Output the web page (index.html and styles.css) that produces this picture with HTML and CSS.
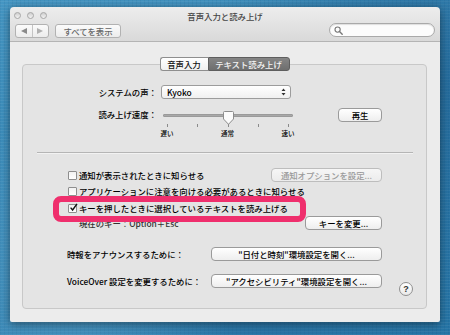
FILE: index.html
```html
<!DOCTYPE html>
<html>
<head>
    <title>音声入力と読み上げ</title>
    <link rel="stylesheet" href="styles.css">
</head>
<body>
    <!-- Preferences window -->
    <div class="window">
        <div class="titlebar">
            <div class="title-row">
                <div class="lights">
                    <span class="light"></span>
                    <span class="light"></span>
                    <span class="light"></span>
                </div>
                <div class="title">音声入力と読み上げ</div>
                <div></div>
            </div>
            <div class="toolbar">
                <div class="nav">
                    <span class="nav-part">
                        <svg width="6" height="6" viewBox="0 0 6 6"><path d="M0 3 L6 0 L6 6 Z" fill="#8a8a8a"/></svg>
                    </span>
                    <span class="nav-part">
                        <svg width="6" height="6" viewBox="0 0 6 6"><path d="M6 3 L0 0 L0 6 Z" fill="#b0b0b0"/></svg>
                    </span>
                </div>
                <div class="tool-btn">すべてを表示</div>
                <div class="search">
                    <svg width="9" height="9" viewBox="0 0 9 9"><circle cx="3.6" cy="3.6" r="2.6" fill="none" stroke="#777" stroke-width="1.1"/><path d="M5.5 5.5 L8.2 8.2" stroke="#777" stroke-width="1.4" stroke-linecap="round"/></svg>
                </div>
            </div>
        </div>

        <div class="content">
            <!-- Tabs -->
            <div class="tabs">
                <span class="tab">音声入力</span>
                <span class="tab active">テキスト読み上げ</span>
            </div>

            <div class="group">
                <div class="form-row">
                    <div class="form-label">システムの声：</div>
                    <div class="popup">
                        <span>Kyoko</span>
                        <svg width="5" height="8" viewBox="0 0 5 8"><path d="M2.5 0.5 L4.5 3 L0.5 3 Z M2.5 7.5 L4.5 5 L0.5 5 Z" fill="#333"/></svg>
                    </div>
                </div>

                <div class="form-row speed-row">
                    <div class="form-label">読み上げ速度：</div>
                    <div class="slider">
                        <div class="track"></div>
                        <svg class="knob" width="11" height="14" viewBox="0 0 11 14">
                            <path d="M1.5 0.5 H9.5 Q10.5 0.5 10.5 1.5 V8 L5.5 13.3 L0.5 8 V1.5 Q0.5 0.5 1.5 0.5 Z" fill="#fbfbfb" stroke="#8c8c8c"/>
                        </svg>
                        <div class="ticks">
                            <span></span><span></span><span></span><span></span><span></span>
                        </div>
                        <div class="tick-labels">
                            <span>遅い</span><span>通常</span><span>速い</span>
                        </div>
                    </div>
                    <div class="btn play">再生</div>
                </div>

                <div class="separator"></div>

                <div class="check-row first">
                    <span class="check"></span>
                    <span class="check-text">通知が表示されたときに知らせる</span>
                    <div class="btn disabled notify-btn">通知オプションを設定...</div>
                </div>
                <div class="check-row second">
                    <span class="check"></span>
                    <span class="check-text">アプリケーションに注意を向ける必要があるときに知らせる</span>
                </div>
                <div class="check-row third">
                    <span class="check">
                        <svg width="9" height="9" viewBox="0 0 9 9"><path d="M1.6 4.6 L3.6 7 L8 0.8" fill="none" stroke="#111" stroke-width="1.4"/></svg>
                    </span>
                    <span class="check-text">キーを押したときに選択しているテキストを読み上げる</span>
                </div>
                <div class="key-row">
                    <span class="key-text">現在のキー：Option＋Esc</span>
                    <div class="btn key-btn">キーを変更...</div>
                </div>

                <div class="link-row first-link">
                    <div class="link-label">時報をアナウンスするために：</div>
                    <div class="btn wide">"日付と時刻"環境設定を開く...</div>
                </div>
                <div class="link-row">
                    <div class="link-label">VoiceOver 設定を変更するために：</div>
                    <div class="btn wide">"アクセシビリティ"環境設定を開く...</div>
                    <div class="help">?</div>
                </div>

                <!-- marker drawn over the screenshot -->
                <div class="highlight"></div>
            </div>
        </div>
    </div>
</body>
</html>
```

FILE: styles.css
```css
/* Desktop */
body {
    margin: 0;
    padding: 7px 10px;
    width: 450px;
    height: 335px;
    box-sizing: border-box;
    overflow: hidden;
    font-family: "Noto Sans CJK JP", "Noto Sans", sans-serif;
    font-size: 8.4px;
    font-weight: 500;
    color: #000;
    background:
        radial-gradient(circle at 15% 85%, rgba(120, 190, 225, 0.35), transparent 35%),
        radial-gradient(circle at 95% 25%, rgba(15, 75, 125, 0.45), transparent 45%),
        radial-gradient(circle at 60% 100%, rgba(40, 110, 160, 0.5), transparent 40%),
        repeating-linear-gradient(0deg, rgba(255, 255, 255, 0.06) 0 1px, transparent 1px 3px),
        repeating-linear-gradient(90deg, rgba(0, 40, 80, 0.06) 0 1px, transparent 1px 4px),
        linear-gradient(160deg, #4596c3, #2574a5);
}

/* Window frame */
.window {
    width: 430px;
    height: 315px;
    border-radius: 4px 4px 2px 2px;
    overflow: hidden;
    box-shadow: 0 2px 10px rgba(0, 0, 0, 0.45);
    display: flex;
    flex-direction: column;
}

.titlebar {
    height: 35px;
    box-sizing: border-box;
    background: linear-gradient(#ededed, #d9d9d9);
    border-bottom: 1px solid #b4b4b4;
}

.title-row {
    height: 15px;
    display: grid;
    grid-template-columns: 1fr auto 1fr;
    align-items: center;
    padding-top: 1px;
}

.lights {
    display: flex;
    gap: 6px;
    padding-left: 4px;
}

.light {
    width: 7px;
    height: 7px;
    box-sizing: border-box;
    border-radius: 50%;
    border: 1px solid #a6a6a6;
    background: linear-gradient(#cfcfcf, #f2f2f2);
}

.title {
    color: #454545;
    line-height: 12px;
}

.toolbar {
    display: flex;
    align-items: flex-start;
    padding: 0 5px;
}

.nav {
    width: 34px;
    height: 14px;
    box-sizing: border-box;
    border: 1px solid #b2b2b2;
    border-radius: 3px;
    background: linear-gradient(#fbfbfb, #ececec);
    display: flex;
    margin-top: 1px;
}

.nav-part {
    flex: 1;
    display: flex;
    align-items: center;
    justify-content: center;
}

.nav-part + .nav-part {
    border-left: 1px solid #c4c4c4;
}

.tool-btn {
    width: 66px;
    height: 14px;
    box-sizing: border-box;
    margin-left: 6px;
    margin-top: 1px;
    border: 1px solid #b2b2b2;
    border-radius: 3px;
    background: linear-gradient(#fbfbfb, #ececec);
    color: #666;
    text-align: center;
    line-height: 12px;
}

.search {
    margin-left: auto;
    width: 106px;
    height: 14px;
    box-sizing: border-box;
    border: 1px solid #a9a9a9;
    border-radius: 7px;
    background: #fcfcfc;
    box-shadow: inset 0 1px 1px rgba(0, 0, 0, 0.12);
    display: flex;
    align-items: center;
    padding-left: 4px;
}

/* Pane */
.content {
    flex: 1;
    background: #ececec;
    padding: 15px 13px 13px 12px;
}

.tabs {
    display: flex;
    justify-content: center;
    position: relative;
    z-index: 1;
    margin-bottom: -7px;
}

.tab {
    height: 14px;
    box-sizing: border-box;
    line-height: 12px;
    text-align: center;
    border: 1px solid #8e8e8e;
    background: linear-gradient(#ffffff, #f0f0f0);
    color: #111;
}

.tab:first-child {
    width: 48px;
    border-radius: 3px 0 0 3px;
    border-right: none;
}

.tab.active {
    width: 82px;
    border-radius: 0 3px 3px 0;
    background: linear-gradient(#858585, #6e6e6e);
    border-color: #5e5e5e;
    color: #f4f4f4;
}

.group {
    position: relative;
    height: 245px;
    box-sizing: border-box;
    border: 1px solid #c8c8c8;
    border-radius: 4px;
    background: #e4e4e4;
    padding-top: 20px;
}

/* Voice and speed */
.form-row {
    display: flex;
    align-items: flex-start;
    height: 14px;
}

.form-label {
    width: 134px;
    text-align: right;
    line-height: 14px;
    margin-right: 4px;
}

.popup {
    width: 130px;
    height: 14px;
    box-sizing: border-box;
    border: 1px solid #9c9c9c;
    border-radius: 3px;
    background: linear-gradient(#ffffff, #f0f0f0);
    display: flex;
    align-items: center;
    justify-content: space-between;
    padding: 0 4px 0 5px;
    line-height: 12px;
}

.speed-row {
    margin-top: 8px;
    height: 30px;
}

.slider {
    position: relative;
    width: 130px;
    height: 30px;
    margin-left: 2px;
}

.track {
    margin-top: 7px;
    height: 1px;
    border-radius: 1px;
    background: #a8a8a8;
    border: 1px solid #9a9a9a;
}

.knob {
    position: absolute;
    left: 60px;
    top: 4px;
}

.ticks {
    display: flex;
    justify-content: space-between;
    padding: 0 4px;
    margin-top: 7px;
}

.ticks span {
    width: 1px;
    height: 3px;
    background: #8a8a8a;
}

.tick-labels {
    display: flex;
    justify-content: space-between;
    margin: 2px -5px 0 -6px;
}

.tick-labels span {
    width: 20px;
    text-align: center;
    font-size: 6.5px;
    line-height: 9px;
}

.btn {
    height: 14px;
    box-sizing: border-box;
    border: 1px solid #9a9a9a;
    border-radius: 4px;
    background: linear-gradient(#ffffff, #eeeeee);
    text-align: center;
    line-height: 12px;
    white-space: nowrap;
}

.play {
    width: 44px;
    margin-left: 45px;
    margin-top: 1px;
}

.separator {
    margin: 15px 13px 0 14px;
    height: 1px;
    background: #b5b5b5;
    border-bottom: 1px solid #f2f2f2;
}

/* Options */
.check-row {
    display: flex;
    align-items: center;
    height: 14px;
    padding-left: 45px;
}

.check-row.first {
    margin-top: 14px;
}

.check-row.second {
    margin-top: 2px;
}

.check-row.third {
    margin-top: 3px;
}

.check {
    width: 9px;
    height: 9px;
    box-sizing: border-box;
    border: 1px solid #8e8e8e;
    border-radius: 1px;
    background: linear-gradient(#f2f2f2, #ffffff);
    position: relative;
}

.check svg {
    position: absolute;
    left: 0;
    top: -2px;
}

.check-text {
    margin-left: 2px;
    white-space: nowrap;
}

.notify-btn {
    width: 111px;
    margin-left: auto;
    margin-right: 44px;
}

.btn.disabled {
    color: #9a9a9a;
    border-color: #bdbdbd;
    background: linear-gradient(#f6f6f6, #ececec);
}

.key-row {
    display: flex;
    align-items: center;
    height: 14px;
    margin-top: 1px;
    padding-left: 56px;
}

.key-text {
    color: #333;
}

.key-btn {
    width: 77px;
    margin-left: auto;
    margin-right: 44px;
}

.link-row {
    display: flex;
    align-items: flex-start;
    padding-left: 44px;
    margin-top: 13px;
}

.link-row.first-link {
    margin-top: 17px;
}

.link-label {
    width: 144px;
    line-height: 14px;
    white-space: nowrap;
}

.wide {
    width: 171px;
}

.help {
    width: 14px;
    height: 14px;
    box-sizing: border-box;
    margin-left: 17px;
    margin-top: 8px;
    border: 1px solid #909090;
    border-radius: 50%;
    background: linear-gradient(#ffffff, #e9e9e9);
    text-align: center;
    line-height: 12px;
    font-family: "Liberation Sans", Arial, sans-serif;
    font-weight: bold;
    font-size: 9px;
    color: #333;
}

/* Pink marker round the checked option */
.highlight {
    position: absolute;
    left: 30px;
    top: 131px;
    width: 253px;
    height: 26px;
    box-sizing: border-box;
    border: 6px solid #ef2f6d;
    border-radius: 8px;
}
```
